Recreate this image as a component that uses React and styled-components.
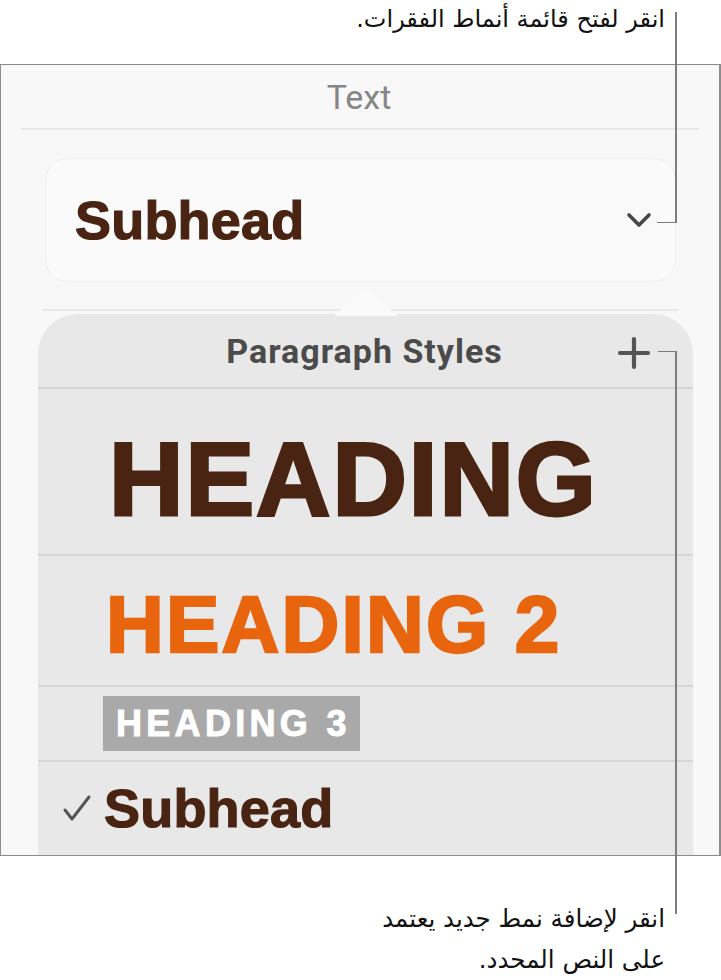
import React from 'react';
import styled, { createGlobalStyle } from 'styled-components';

const GlobalStyle = createGlobalStyle`
  html, body {
    margin: 0;
    padding: 0;
    background: #ffffff;
  }
`;

// Page and callouts
const Page = styled.div`
  position: relative;
  width: 721px;
  height: 980px;
  overflow: hidden;
  font-family: Roboto, "Liberation Sans", sans-serif;
`;

const Callout = styled.div`
  direction: rtl;
  text-align: right;
  font-family: "DejaVu Sans", sans-serif;
  font-size: 24px;
  line-height: 41px;
  color: #111;
  padding-right: 56px;
`;

const TopCallout = styled(Callout)`
  height: 64px;
  box-sizing: border-box;
  line-height: 38px;
`;

const BottomCallout = styled(Callout)`
  padding-top: 42px;
  font-size: 24.5px;
`;

const Leader = styled.div`
  position: absolute;
  background: #7d7d7d;
`;

// Inspector frame
const Frame = styled.div`
  box-sizing: border-box;
  height: 792px;
  border: 1.5px solid #8c8c8c;
  border-right-width: 2px;
  background: #f8f8f8;
  overflow: hidden;
  display: flex;
  flex-direction: column;
`;

const PanelTitle = styled.div`
  height: 63px;
  display: flex;
  align-items: center;
  justify-content: center;
  font-size: 34px;
  color: #868686;
  padding-right: 2px;
`;

const Rule = styled.div`
  height: 2px;
  background: #e8e8e8;
  margin: ${(p) => p.$margin};
`;

const StyleButton = styled.div`
  margin: 28px 43px 0 44px;
  height: 124px;
  box-sizing: border-box;
  border-radius: 22px;
  background: #fafafa;
  border: 1px solid #f0f0f0;
  display: flex;
  align-items: center;
  justify-content: space-between;
  padding: 0 22px 0 29px;
`;

const StyleName = styled.span`
  font-family: "Liberation Sans", Arial, sans-serif;
  font-weight: 700;
  font-size: 54px;
  letter-spacing: 0.2px;
  -webkit-text-stroke: 1.2px #4a2412;
  color: #4a2412;
  line-height: 1;
`;

const Chevron = () => (
  <svg width="28" height="20" viewBox="0 0 28 20">
    <path d="M4 5 L14 15 L24 5" fill="none" stroke="#474747" strokeWidth="3.6" strokeLinecap="round" strokeLinejoin="round" />
  </svg>
);

// Paragraph styles popover
const PopoverWrap = styled.div`
  position: relative;
  margin: 3px 26px 0 37px;
  flex: 1;
`;

const Arrow = styled.div`
  position: absolute;
  left: 296px;
  top: -26px;
  width: 64px;
  height: 28px;
  background: #fafafa;
  clip-path: polygon(0 100%, 44% 8%, 50% 0, 56% 8%, 100% 100%);
`;

const Popover = styled.div`
  height: 100%;
  background: #e8e8e8;
  border-radius: 40px 40px 0 0;
  display: flex;
  flex-direction: column;
`;

const PopoverHeader = styled.div`
  position: relative;
  height: 73px;
  display: flex;
  align-items: center;
  justify-content: center;
  font-size: 34px;
  font-weight: 700;
  letter-spacing: 1px;
  color: #4b4b4b;
  padding-right: 2px;
  border-bottom: 2px solid #d4d4d4;
`;

const AddButton = styled.div`
  position: absolute;
  right: 42px;
  top: 22px;
  display: flex;
`;

const StyleRow = styled.div`
  height: ${(p) => p.$h}px;
  box-sizing: border-box;
  display: flex;
  align-items: center;
  padding-left: ${(p) => p.$pl ?? 69}px;
  padding-top: ${(p) => p.$pt ?? 0}px;
  border-bottom: ${(p) => (p.$last ? 'none' : '2px solid #d6d6d6')};
`;

const Heading = styled.span`
  font-family: "Liberation Sans", Arial, sans-serif;
  font-weight: 700;
  font-size: ${(p) => p.$size}px;
  color: ${(p) => p.$color};
  -webkit-text-stroke: ${(p) => p.$stroke}px ${(p) => p.$color};
  letter-spacing: ${(p) => p.$ls || 0}px;
  line-height: 1;
`;

const Heading3 = styled.span`
  background: #a9a9a9;
  color: #ffffff;
  font-family: "Liberation Sans", Arial, sans-serif;
  font-weight: 700;
  font-size: 36px;
  letter-spacing: 4.3px;
  -webkit-text-stroke: 1px #ffffff;
  line-height: 55px;
  padding: 0 9px 0 13px;
  margin-left: -4px;
`;

const Check = styled.span`
  display: flex;
  padding-left: 24px;
  margin-right: 12px;
`;

const PlusIcon = () => (
  <svg width="34" height="34" viewBox="0 0 34 34">
    <path d="M17 3 V31 M3 17 H31" stroke="#555" strokeWidth="4.2" strokeLinecap="round" />
  </svg>
);

const CheckIcon = () => (
  <svg width="30" height="28" viewBox="0 0 30 28">
    <path d="M3 16 L10 25 L27 3" fill="none" stroke="#555" strokeWidth="3" strokeLinecap="round" strokeLinejoin="round" />
  </svg>
);

export default function App() {
  return (
    <Page>
      <GlobalStyle />
      <TopCallout>انقر لفتح قائمة أنماط الفقرات.</TopCallout>

      <Frame>
        <PanelTitle>Text</PanelTitle>
        <Rule $margin="0 20px 0 20px" />
        <StyleButton>
          <StyleName>Subhead</StyleName>
          <Chevron />
        </StyleButton>
        <Rule $margin="27px 41px 0 42px" />

        <PopoverWrap>
          <Arrow />
          <Popover>
            <PopoverHeader>
              Paragraph Styles
              <AddButton>
                <PlusIcon />
              </AddButton>
            </PopoverHeader>
            <StyleRow $h={167} $pt={16} $pl={71}>
              <Heading $size={103} $color="#4a2412" $ls={2} $stroke={3}>HEADING</Heading>
            </StyleRow>
            <StyleRow $h={131} $pt={8} $pl={68}>
              <Heading $size={80} $color="#e8650e" $ls={2.2} $stroke={2.4}>HEADING 2</Heading>
            </StyleRow>
            <StyleRow $h={75}>
              <Heading3>HEADING 3</Heading3>
            </StyleRow>
            <StyleRow $h={92} $pl={0} $last>
              <Check>
                <CheckIcon />
              </Check>
              <StyleName>Subhead</StyleName>
            </StyleRow>
          </Popover>
        </PopoverWrap>
      </Frame>

      <BottomCallout>
        انقر لإضافة نمط جديد يعتمد
        <br />
        على النص المحدد.
      </BottomCallout>

      {/* leader lines from the callouts */}
      <Leader style={{ left: 675, top: 12, width: 1.5, height: 211 }} />
      <Leader style={{ left: 657, top: 221.5, width: 19, height: 1.5 }} />
      <Leader style={{ left: 658, top: 350.5, width: 18, height: 1.5 }} />
      <Leader style={{ left: 675, top: 350.5, width: 1.5, height: 563 }} />
    </Page>
  );
}
